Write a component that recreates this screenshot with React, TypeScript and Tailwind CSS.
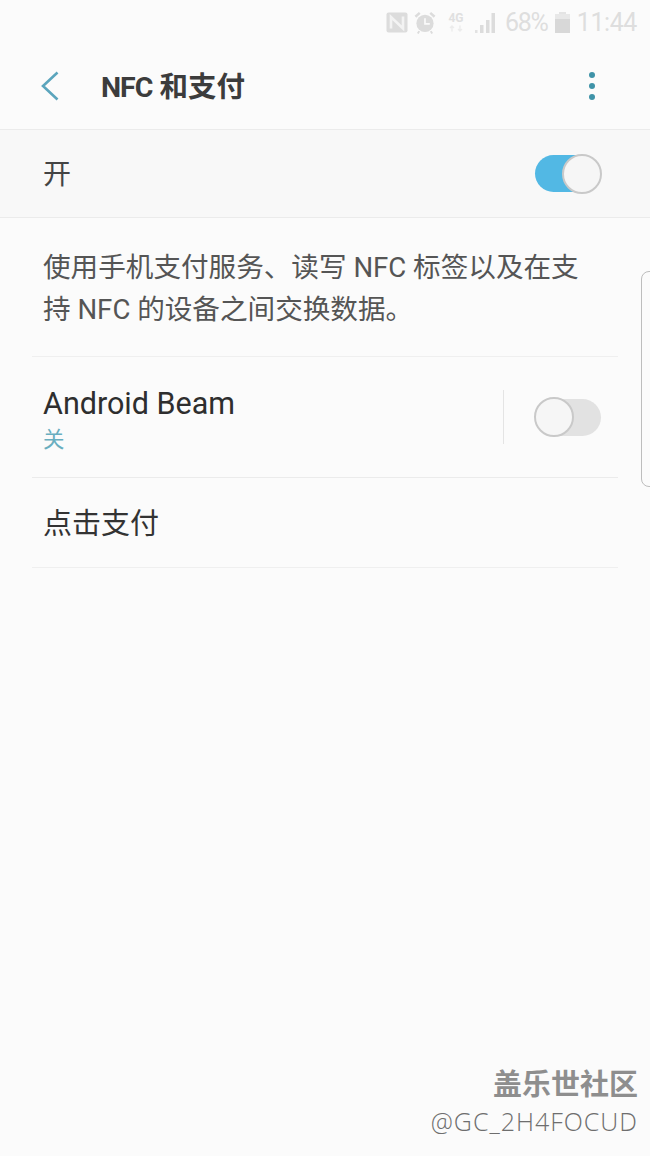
import React from "react";

const CJK = "font-['Roboto','Noto_Sans_CJK_SC',sans-serif]";

function StatusBar() {
  return (
    <div className="flex h-[44px] items-center justify-end pr-[13px] text-[#dedede]">
      {/* NFC mark */}
      <svg width="22" height="21" viewBox="0 0 22 21">
        <rect x="0.5" y="0.5" width="21" height="20" rx="2" fill="#dcdcdc" />
        <path d="M5 16.5V5L17 16.5V4.5" fill="none" stroke="#f3f3f3" strokeWidth="2.6" />
      </svg>
      {/* alarm */}
      <svg width="22" height="23" viewBox="0 0 22 24" className="ml-[6px]">
        <circle cx="11" cy="13" r="9" fill="#dcdcdc" />
        <path d="M11 7.5V13.5H16" fill="none" stroke="#fafafa" strokeWidth="1.8" />
        <path d="M1 6L5.5 2M21 6L16.5 2" stroke="#dcdcdc" strokeWidth="2.6" />
        <path d="M5 21L3.5 23.5M17 21L18.5 23.5" stroke="#dcdcdc" strokeWidth="2" />
      </svg>
      <div className="ml-[11px] flex w-[18px] flex-col items-center leading-none">
        <span className="text-[12px] font-bold leading-[13px] text-[#e0e0e0]">4G</span>
        <svg width="16" height="7" viewBox="0 0 16 7">
          <path d="M4 6.5V1M2 3L4 1L6 3M12 0.5V6M10 4L12 6L14 4" fill="none" stroke="#ececec" strokeWidth="1.4" />
        </svg>
      </div>
      {/* signal */}
      <svg width="20" height="21" viewBox="0 0 20 21" className="ml-[10px]">
        <rect x="0" y="18" width="2.5" height="3" fill="#e2e2e2" />
        <rect x="5" y="13" width="3.5" height="8" fill="#dcdcdc" />
        <rect x="11" y="8" width="3.5" height="13" fill="#dcdcdc" />
        <rect x="16.5" y="1" width="3.5" height="20" fill="#dcdcdc" />
      </svg>
      <span className="ml-[10px] text-[25px] leading-none tracking-[-1.2px]">68%</span>
      {/* battery */}
      <svg width="15" height="21" viewBox="0 0 15 21" className="ml-[7px]">
        <rect x="4" y="0" width="7" height="3" fill="#e4e4e4" />
        <rect x="0" y="2" width="15" height="6" fill="#e8e8e8" />
        <rect x="0" y="7" width="15" height="14" fill="#d8d8d8" />
      </svg>
      <span className="ml-[7px] text-[25px] leading-none tracking-[-0.4px]">11:44</span>
    </div>
  );
}

function Toggle({ on }: { on: boolean }) {
  return (
    <div className={`relative h-[37px] w-[66px] rounded-full ${on ? "bg-[#52b8e4]" : "bg-[#e2e2e2]"}`}>
      <div
        className={`absolute top-[-1.5px] h-[40px] w-[40px] rounded-full border-2 border-[#c9c9c9] bg-[#f6f6f6] ${
          on ? "right-[-1px]" : "left-[-1px]"
        }`}
      />
    </div>
  );
}

export default function App() {
  return (
    <div className={`relative h-[1156px] w-[650px] overflow-hidden bg-[#fbfbfb] ${CJK}`}>
      <StatusBar />

      <header className="flex h-[85px] items-center pl-[41px] pr-[55px] pb-[1px]">
        <svg width="18" height="30" viewBox="0 0 18 30" className="mr-[42px]">
          <path d="M16.5 1.5L2 15L16.5 28.5" fill="none" stroke="#5ba5bd" strokeWidth="2.6" />
        </svg>
        <h1 className="mt-[5px] flex-1 text-[28.5px] font-bold leading-none text-[#3c3c3c]">
          <span className="tracking-[-1px]">NFC</span> 和支付
        </h1>
        <div className="flex flex-col gap-[5px]">
          <span className="h-[6px] w-[6px] rounded-full bg-[#3f93a8]" />
          <span className="h-[6px] w-[6px] rounded-full bg-[#3f93a8]" />
          <span className="h-[6px] w-[6px] rounded-full bg-[#3f93a8]" />
        </div>
      </header>

      <section className="flex h-[89px] items-center justify-between border-y border-[#ebebeb] bg-[#f8f8f8] pl-[43px] pr-[49px]">
        <span className="mt-[3px] text-[28px] leading-none text-[#444444]">开</span>
        <Toggle on />
      </section>

      <div className="px-[32px]">
        <p className="h-[139px] border-b border-[#efefef] pl-[11px] pr-[30px] pt-[29px] text-[27.6px] leading-[42px] text-[#555555]">
          使用手机支付服务、读写 NFC 标签以及在支持 NFC 的设备之间交换数据。
        </p>

        <div className="flex h-[121px] items-center justify-between border-b border-[#ebebeb] pl-[11px] pr-[17px]">
          <div className="flex flex-col pt-[3px]">
            <span className="text-[30.5px] leading-[38px] text-[#2e2e2e]">Android Beam</span>
            <span className="mt-[4px] text-[21.5px] leading-[26px] text-[#69aebf]">关</span>
          </div>
          <div className="flex items-center gap-[31px]">
            <div className="h-[54px] w-px bg-[#e4e4e4]" />
            <Toggle on={false} />
          </div>
        </div>

        <div className="flex h-[90px] items-center border-b border-[#efefef] pl-[11px] pt-[3px]">
          <span className="text-[29px] leading-none text-[#333333]">点击支付</span>
        </div>
      </div>

      {/* edge handle of the side panel */}
      <div className="absolute left-[641px] top-[271px] h-[216px] w-[12px] rounded-l-[8px] border border-[#bdbdbd] bg-[#fbfbfb]" />

      {/* community watermark */}
      <div className="absolute right-[12px] top-[1067px] flex flex-col items-end">
        <span className="text-[29px] font-bold leading-[36px] text-[#8e8e8e]">盖乐世社区</span>
        <span className="mt-[1px] font-['Open_Sans',sans-serif] text-[25px] font-light leading-[34px] tracking-[1px] text-[#6e6e6e]">@GC_2H4FOCUD</span>
      </div>
    </div>
  );
}
